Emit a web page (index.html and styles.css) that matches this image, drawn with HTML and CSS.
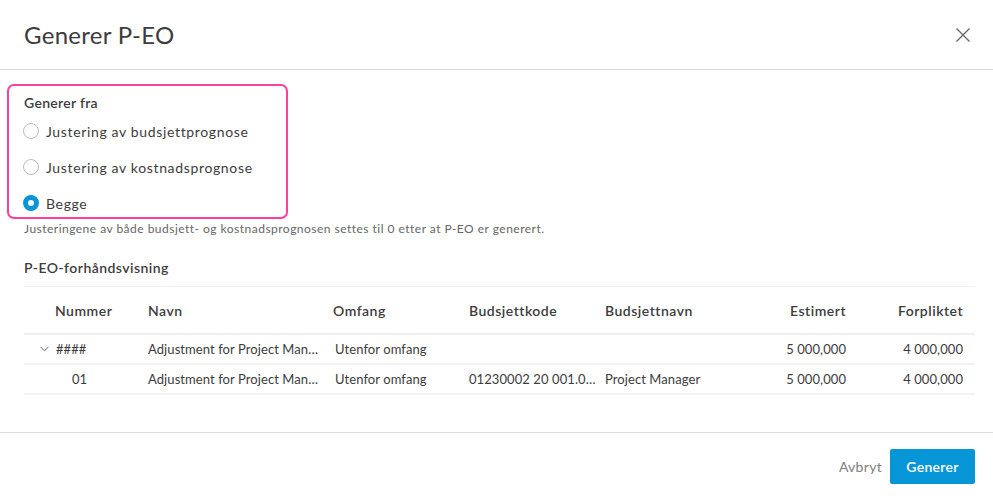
FILE: index.html
```html
<!DOCTYPE html>
<html lang="no">
<head>
<meta charset="utf-8">
<title>Generer P-EO</title>
<link rel="stylesheet" href="styles.css">
</head>
<body>
<div class="dialog">
  <header class="dlg-header">
    <h1 class="dlg-title">Generer P-EO</h1>
    <button class="close" aria-label="Lukk">
      <svg width="16" height="16" viewBox="0 0 16 16"><path d="M1.5 1.5 L14.5 14.5 M14.5 1.5 L1.5 14.5" stroke="#6b6b6b" stroke-width="1.4" fill="none"/></svg>
    </button>
  </header>
  <main class="dlg-body">
    <div class="source">
      <div class="highlight"></div>
      <div class="group-label">Generer fra</div>
      <label class="radio"><span class="dot"></span>Justering av budsjettprognose</label>
      <label class="radio"><span class="dot"></span>Justering av kostnadsprognose</label>
      <label class="radio"><span class="dot checked"></span>Begge</label>
    </div>
    <p class="helper">Justeringene av både budsjett- og kostnadsprognosen settes til 0 etter at P-EO er generert.</p>
    <h2 class="section-title">P-EO-forhåndsvisning</h2>
    <div class="table">
      <div class="tr th">
        <div class="c c-num">Nummer</div>
        <div class="c">Navn</div>
        <div class="c">Omfang</div>
        <div class="c">Budsjettkode</div>
        <div class="c">Budsjettnavn</div>
        <div class="c right">Estimert</div>
        <div class="c right last">Forpliktet</div>
      </div>
      <div class="tr td">
        <div class="c c-tree"><svg class="chev" width="9" height="6" viewBox="0 0 9 6"><path d="M0.5 0.8 L4.5 4.8 L8.5 0.8" stroke="#666" stroke-width="1" fill="none"/></svg>####</div>
        <div class="c">Adjustment for Project Man…</div>
        <div class="c omf">Utenfor omfang</div>
        <div class="c"></div>
        <div class="c"></div>
        <div class="c right">5 000,000</div>
        <div class="c right last">4 000,000</div>
      </div>
      <div class="tr td">
        <div class="c c-child">01</div>
        <div class="c">Adjustment for Project Man…</div>
        <div class="c omf">Utenfor omfang</div>
        <div class="c">01230002 20 001.0…</div>
        <div class="c">Project Manager</div>
        <div class="c right">5 000,000</div>
        <div class="c right last">4 000,000</div>
      </div>
    </div>
  </main>
  <footer class="dlg-footer">
    <button class="btn-cancel">Avbryt</button>
    <button class="btn-primary">Generer</button>
  </footer>
</div>
</body>
</html>
```

FILE: styles.css
```css
* { box-sizing: border-box; }
html, body { margin: 0; padding: 0; background: #fff; }
body {
  font-family: "Lato", "Noto Sans", sans-serif;
  color: #3c3c3c;
  width: 993px;
  height: 502px;
  overflow: hidden;
}
.dialog { display: flex; flex-direction: column; height: 502px; }

.dlg-header {
  height: 70px;
  border-bottom: 1px solid #dcdcdc;
  display: flex;
  align-items: center;
  justify-content: space-between;
  padding: 0 22px 0 24px;
}
.dlg-title {
  margin: 0;
  font-size: 24px;
  font-weight: 400;
  color: #3c3c3c;
  letter-spacing: 0.3px;
  line-height: 30px;
}
.close {
  border: 0; background: none; padding: 0; width: 16px; height: 16px;
  display: flex; cursor: pointer;
}

.dlg-body {
  flex: 1;
  padding: 23px 18px 0 24px;
}
.source { position: relative; }
.highlight {
  position: absolute;
  left: -17px; top: -9px;
  width: 281px; height: 135px;
  border: 2px solid #ff3f9d;
  border-radius: 7px;
  pointer-events: none;
}
.group-label {
  font-size: 14px;
  font-weight: 600;
  line-height: 20px;
  color: #3c3c3c;
  letter-spacing: 0.3px;
}
.radio {
  display: flex;
  align-items: center;
  height: 36px;
  font-size: 14px;
  gap: 7px;
  margin-left: -1px;
  letter-spacing: 0.65px;
}
.dot {
  width: 16px; height: 16px;
  border-radius: 50%;
  border: 1px solid #bdbdbd;
  background: #fff;
  flex: none;
}
.dot.checked { border: 5px solid #0696d7; }

.helper {
  margin: 0;
  font-size: 12px;
  line-height: 16px;
  color: #666;
  letter-spacing: 0.48px;
}
.section-title {
  margin: 21px 0 8px;
  font-size: 14px;
  font-weight: 600;
  line-height: 20px;
  color: #3c3c3c;
  letter-spacing: 0.45px;
}

.table { border-top: 1px solid #f0f0f0; }
.tr {
  display: grid;
  grid-template-columns: 116px 185px 136px 136px 140px 117px 121px;
  align-items: center;
}
.th {
  height: 48px;
  border-bottom: 2px solid #efefef;
  font-size: 14px;
  font-weight: 600;
  letter-spacing: 0.5px;
}
.td {
  height: 30px;
  border-bottom: 2px solid #f2f2f2;
  font-size: 13px;
  color: #3c3c3c;
  letter-spacing: 0.08px;
}
.c {
  padding: 0 8px;
  white-space: nowrap;
}
.c.right { text-align: right; }
.c.last { padding-right: 12px; }
.th .c-num { padding-left: 31px; }
.c-tree { display: flex; align-items: center; padding-left: 16px; gap: 7px; }
.c-child { padding-left: 48px; }
.omf { padding-left: 10px; }

.dlg-footer {
  height: 70px;
  border-top: 1px solid #dcdcdc;
  display: flex;
  align-items: center;
  justify-content: flex-end;
  padding: 0 18px 2px 0;
  gap: 8px;
}
.btn-cancel {
  border: 0; background: none;
  font-family: inherit;
  font-size: 14px;
  color: #808080;
  padding: 0;
  letter-spacing: 0.3px;
}
.btn-primary {
  border: 0;
  background: #0696d7;
  color: #fff;
  font-family: inherit;
  font-size: 14px;
  font-weight: 600;
  letter-spacing: 0.3px;
  width: 85px;
  height: 35px;
  border-radius: 2px;
}
```
